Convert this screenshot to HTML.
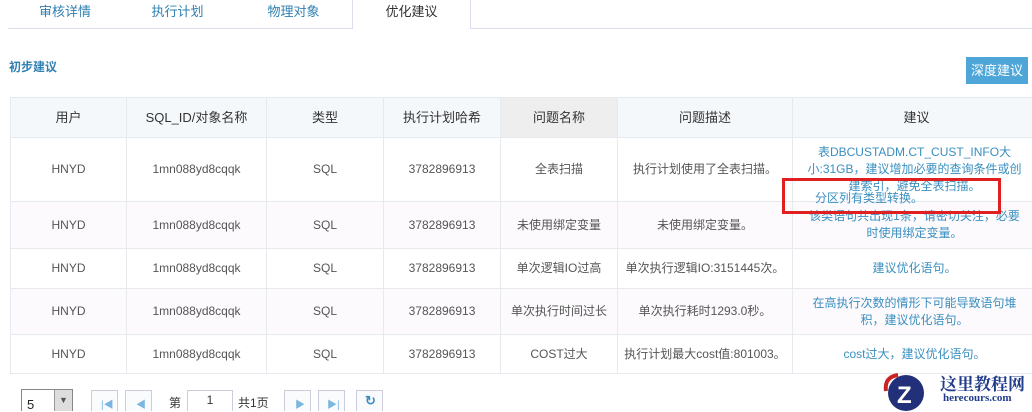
<!DOCTYPE html>
<html><head><meta charset="utf-8"><style>
body{margin:0;width:1032px;height:411px;overflow:hidden;background:#fff;font-family:"Liberation Sans","Noto Sans CJK SC",sans-serif;font-size:12px;color:#555;position:relative}
.a{position:absolute}
.tab{position:absolute;top:0;height:28px;line-height:24px;text-align:center;color:#2f7fb0;font-size:13px}
table{position:absolute;left:10px;top:97px;border-collapse:collapse;table-layout:fixed;width:1030px}
td,th{border:1px solid #e6e9ee;text-align:center;font-weight:normal;padding:0 4px;line-height:17px}
th{background:#f5f8fb;color:#333;font-size:13px;height:39px}
.s{color:#3a8fc0;padding:0 16px 0 12px}
.pk td{background:#fcfafc}
.pb{position:absolute;top:390px;width:27px;height:21px;border:1px solid #ccd;border-bottom:none;box-sizing:border-box;background:#fafbfd}
</style></head><body>
<div class="a" style="left:8px;top:28px;width:344px;height:1px;background:#dde"></div>
<div class="a" style="left:470px;top:28px;width:562px;height:1px;background:#dde"></div>
<div class="tab" style="left:10px;width:110px">审核详情</div>
<div class="tab" style="left:120px;width:115px">执行计划</div>
<div class="tab" style="left:235px;width:117px">物理对象</div>
<div class="tab" style="left:352px;width:117px;color:#333;border-left:1px solid #dde;border-right:1px solid #dde;height:29px">优化建议</div>
<div class="a" style="left:9px;top:58px;color:#2f7fb0;font-weight:bold;font-size:12px">初步建议</div>
<div class="a" style="left:966px;top:57px;width:62px;height:27px;background:#4ea6d8;color:#fff;line-height:27px;text-align:center;font-size:13px">深度建议</div>
<table>
<colgroup><col style="width:116px"><col style="width:140px"><col style="width:117px"><col style="width:117px"><col style="width:117px"><col style="width:175px"><col style="width:248px"></colgroup>
<tr><th>用户</th><th>SQL_ID/对象名称</th><th>类型</th><th>执行计划哈希</th><th style="background:#eee">问题名称</th><th>问题描述</th><th>建议</th></tr>
<tr style="height:64px"><td>HNYD</td><td>1mn088yd8cqqk</td><td>SQL</td><td>3782896913</td><td>全表扫描</td><td>执行计划使用了全表扫描。</td><td class="s">表DBCUSTADM.CT_CUST_INFO大<br>小:31GB，建议增加必要的查询条件或创<br>建索引，避免全表扫描。</td></tr>
<tr class="pk" style="height:47px"><td>HNYD</td><td>1mn088yd8cqqk</td><td>SQL</td><td>3782896913</td><td>未使用绑定变量</td><td>未使用绑定变量。</td><td class="s">该类语句共出现1条，请密切关注，必要<br>时使用绑定变量。</td></tr>
<tr style="height:40px"><td>HNYD</td><td>1mn088yd8cqqk</td><td>SQL</td><td>3782896913</td><td>单次逻辑IO过高</td><td>单次执行逻辑IO:3151445次。</td><td class="s">建议优化语句。</td></tr>
<tr class="pk" style="height:46px"><td>HNYD</td><td>1mn088yd8cqqk</td><td>SQL</td><td>3782896913</td><td>单次执行时间过长</td><td>单次执行耗时1293.0秒。</td><td class="s">在高执行次数的情形下可能导致语句堆<br>积，建议优化语句。</td></tr>
<tr style="height:39px"><td>HNYD</td><td>1mn088yd8cqqk</td><td>SQL</td><td>3782896913</td><td>COST过大</td><td>执行计划最大cost值:801003。</td><td class="s">cost过大，建议优化语句。</td></tr>
</table>
<div class="a s" style="left:803px;top:189px;color:#3a8fc0">分区列有类型转换。</div>
<div class="a" style="left:782px;top:178px;width:213px;height:30px;border:3px solid #e02020"></div>
<div class="a" style="left:21px;top:389px;width:52px;height:22px;border:1px solid #888;border-bottom:none;box-sizing:border-box;font-size:13px;color:#222;padding:7px 0 0 5px">5</div>
<div class="a" style="left:54px;top:390px;width:17px;height:21px;background:#ddd;border-left:1px solid #999;font-size:9px;text-align:center;line-height:20px">▼</div>
<div class="pb" style="left:91px"></div><div class="pb" style="left:125px"></div>
<div class="a" style="left:101px;top:396px;color:#7ab6e0;font-size:10px">|◀</div>
<div class="a" style="left:136px;top:396px;color:#7ab6e0;font-size:10px">◀</div>
<div class="a" style="left:169px;top:394px;color:#333">第</div>
<div class="a" style="left:187px;top:390px;width:46px;height:21px;border:1px solid #ccd;border-bottom:none;box-sizing:border-box;text-align:center;line-height:18px;color:#333">1</div>
<div class="a" style="left:238px;top:394px;color:#333">共1页</div>
<div class="pb" style="left:284px"></div><div class="pb" style="left:318px"></div><div class="pb" style="left:356px"></div>
<div class="a" style="left:295px;top:396px;color:#7ab6e0;font-size:10px">▶</div>
<div class="a" style="left:327px;top:396px;color:#7ab6e0;font-size:10px">▶|</div>
<div class="a" style="left:365px;top:393px;color:#3a8fc0;font-size:13px;font-weight:bold">↻</div>
<svg class="a" style="left:880px;top:369px" width="52" height="42"><path d="M6 22 Q4 8 18 6" stroke="#c22" stroke-width="4" fill="none"/><circle cx="26" cy="24" r="18" fill="#22307a"/><text x="17" y="34" font-size="24" font-weight="bold" fill="#fff" font-family="Liberation Sans">Z</text></svg>
<div class="a" style="left:940px;top:370px;color:#1f3b8a;font-weight:bold;font-size:17px;font-family:'Liberation Serif','Noto Serif CJK SC',serif">这里教程网</div>
<div class="a" style="left:943px;top:392px;color:#1f3b8a;font-weight:bold;font-size:11px;font-family:'Liberation Serif',serif">herecours.com</div>
</body></html>
